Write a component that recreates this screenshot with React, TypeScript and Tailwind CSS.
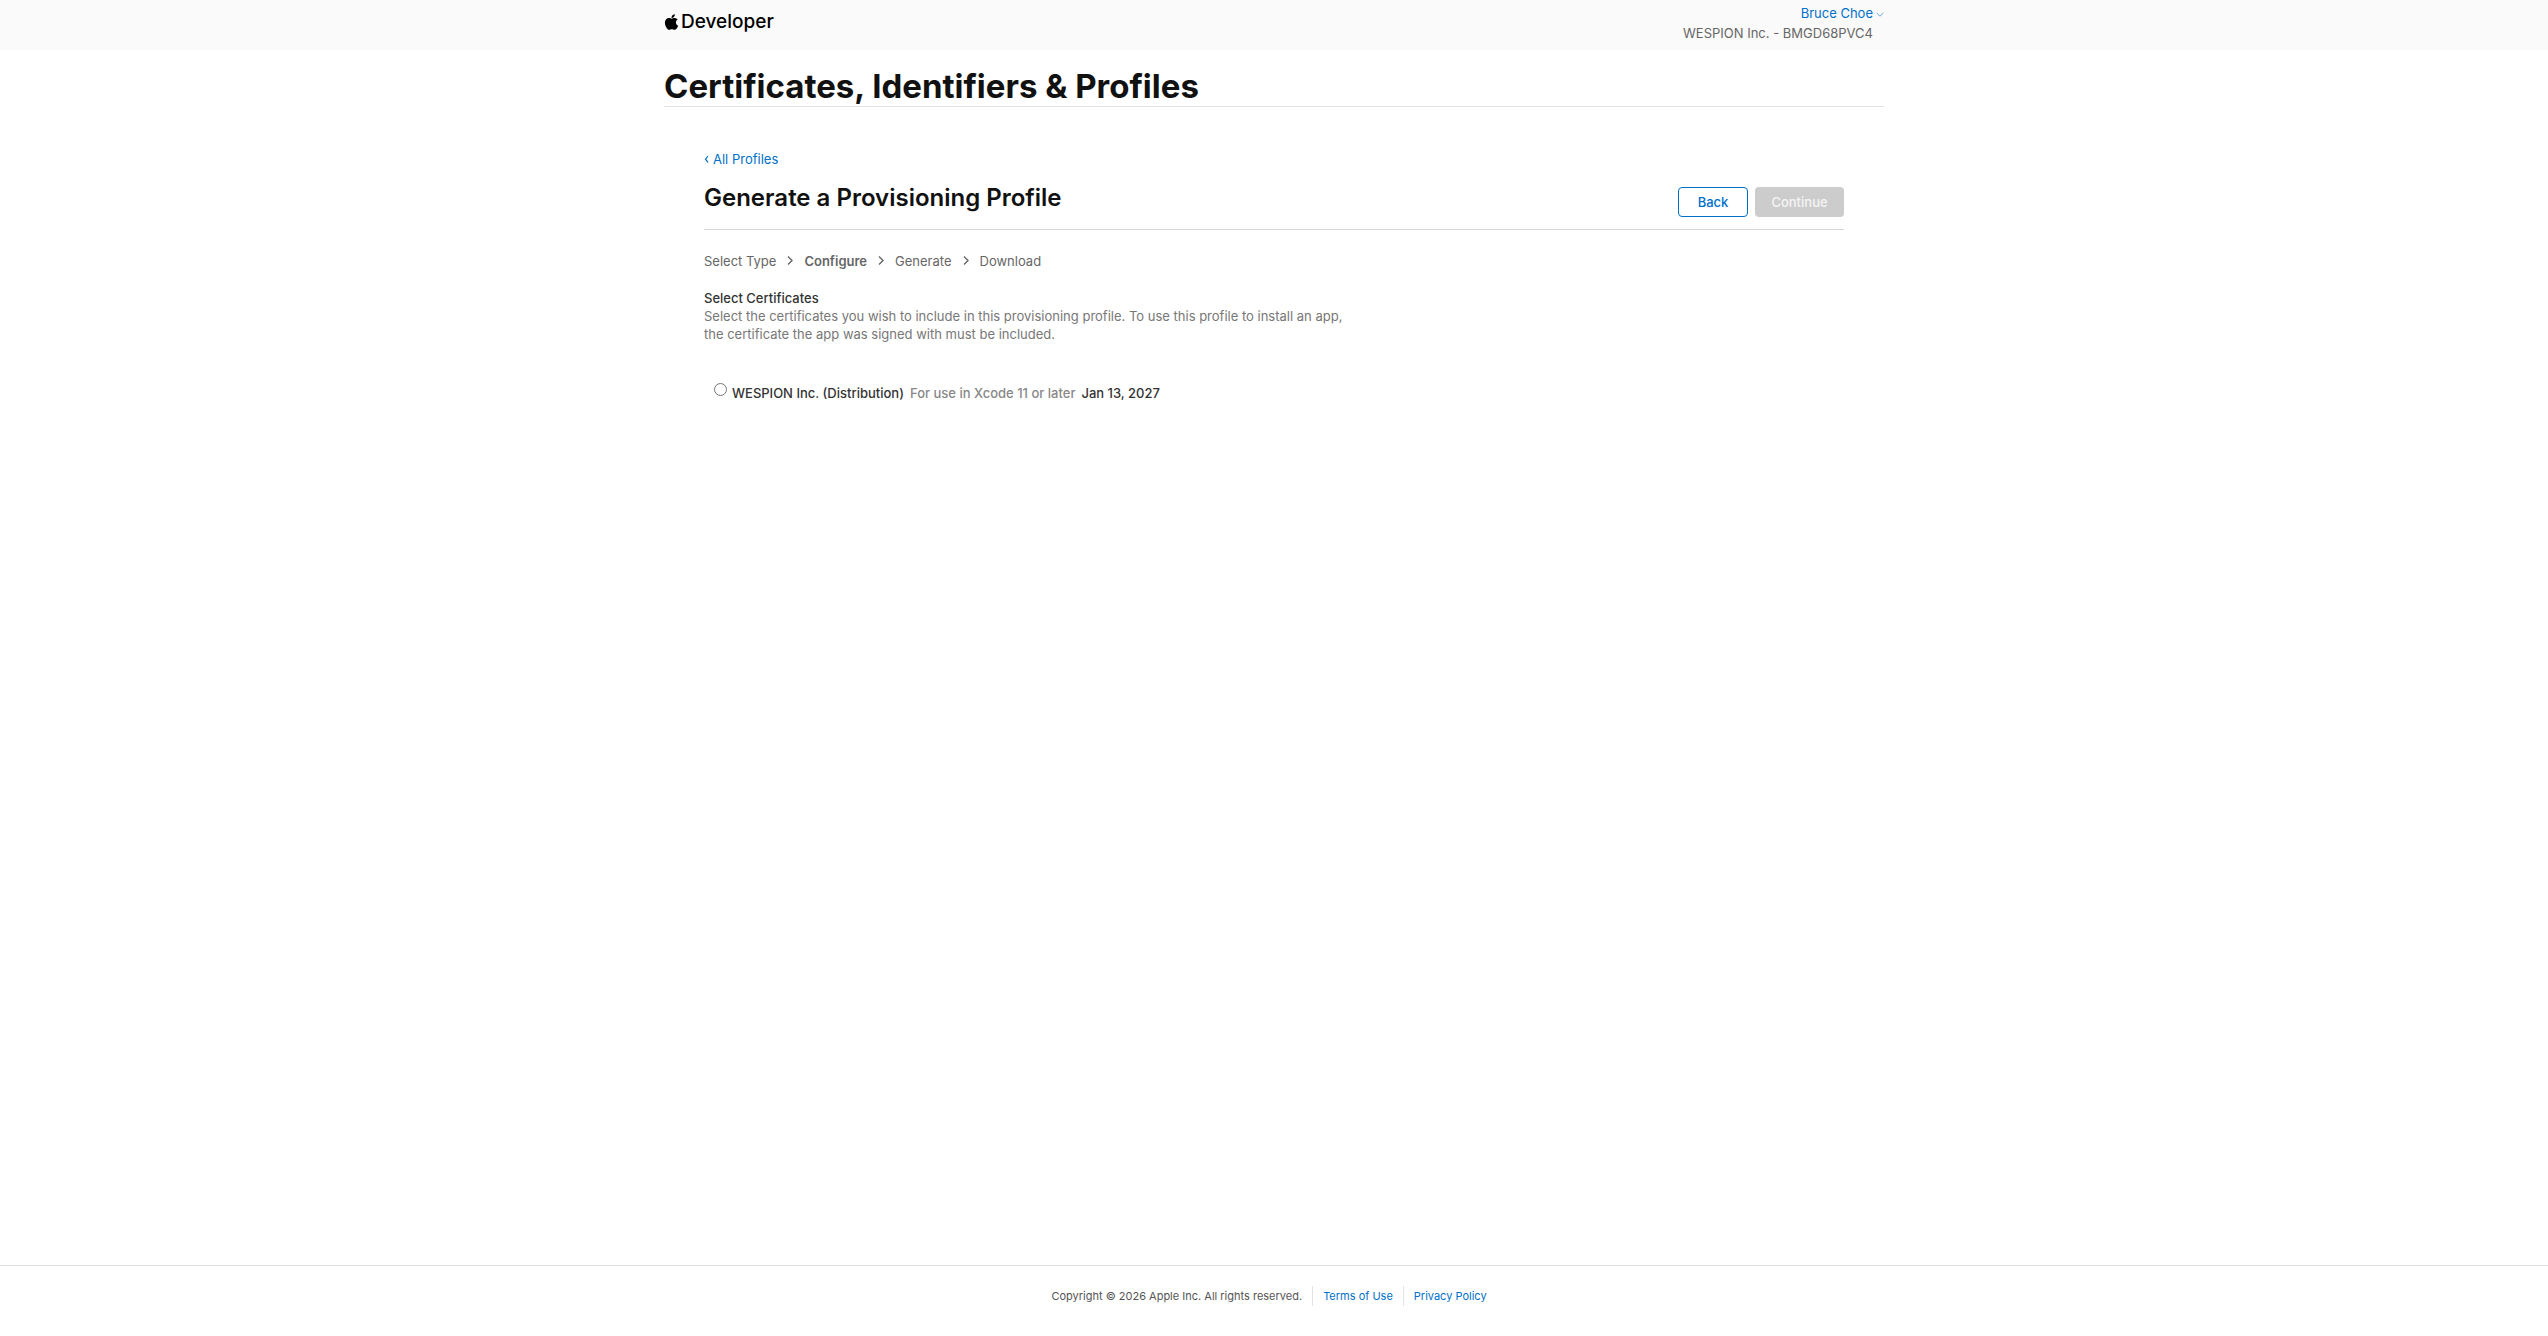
import React from 'react';
import { FaApple } from 'react-icons/fa';

const steps = ['Select Type', 'Configure', 'Generate', 'Download'];
const currentStep = 'Configure';

const certificates = [
  { id: 'dist', name: 'WESPION Inc. (Distribution)', note: 'For use in Xcode 11 or later', expires: 'Jan 13, 2027' },
];

const Header: React.FC = () => (
  <header className="bg-[#fafafa]">
    <div className="max-w-[1220px] h-[50px] mx-auto flex justify-between items-start">
      <a href="#" className="flex items-center gap-[2px] pt-2 text-black" aria-label="Apple Developer">
        <FaApple className="w-[15px] h-[18px]" />
        <span className="text-[19px] leading-7 font-medium">Developer</span>
      </a>
      <div className="flex items-start">
        <div className="pt-[3px] text-right leading-5">
          <button className="block ml-auto text-[#0070c9]">Bruce Choe</button>
          <div className="text-[#666666]">WESPION Inc. - BMGD68PVC4</div>
        </div>
        <svg className="w-2 h-2 ml-[3px] mt-[11px]" viewBox="0 0 8 8" fill="none" stroke="#6ba9dc">
          <path d="M.7 2 4 5.2 7.3 2" />
        </svg>
      </div>
    </div>
  </header>
);

const StepArrow: React.FC = () => (
  <svg className="w-2 h-3 mx-[10px]" viewBox="0 0 8 12" fill="none" stroke="#666666" strokeWidth="1.4">
    <path d="M2 1.5 6 5.5 2 9.5" />
  </svg>
);

const Footer: React.FC = () => (
  <footer className="border-t border-[#e3e3e3] h-[71px] text-[11px] leading-5">
    <div className="pt-5 flex justify-center">
      <p className="text-[#555555] pr-[10px]">Copyright © 2026 Apple Inc. All rights reserved.</p>
      <a href="#" className="text-[#0070c9] border-l border-[#e3e3e3] px-[10px]">Terms of Use</a>
      <a href="#" className="text-[#0070c9] border-l border-[#e3e3e3] px-[10px]">Privacy Policy</a>
    </div>
  </footer>
);

const App: React.FC = () => {
  return (
    <div className="min-h-screen flex flex-col bg-white text-[13px] leading-[18px] text-[#333333] font-['Inter',sans-serif]">
      <Header />
      <main className="flex-1 w-full max-w-[1220px] mx-auto">
        <h1 className="pt-4 text-[33px] leading-10 font-bold text-[#111111] border-b border-[#e3e3e3]">
          Certificates, Identifiers &amp; Profiles
        </h1>

        <div className="px-10 pt-[43px]">
          <a href="#" className="flex items-center gap-1 text-[#0070c9]">
            <svg className="w-[5px] h-2" viewBox="0 0 5 8" fill="none" stroke="currentColor" strokeWidth="1.2">
              <path d="M4 1 1.5 4.2 4 7.4" />
            </svg>
            All Profiles
          </a>

          <div className="flex justify-between items-start pt-[18px] pb-3 border-b border-[#d6d6d6]">
            <h2 className="text-2xl leading-6 font-semibold text-[#111111]">Generate a Provisioning Profile</h2>
            <div className="flex gap-[7px] pt-px font-medium">
              <button className="h-[30px] w-[70px] rounded border border-[#0070c9] text-[#0070c9]">Back</button>
              <button disabled className="h-[30px] w-[89px] rounded bg-[#cccccc] text-[#f5f5f5]">Continue</button>
            </div>
          </div>

          <ol className="flex items-center pt-[22px] text-[#666666]">
            {steps.map((step, i) => (
              <li key={step} className="flex items-center">
                {i > 0 && <StepArrow />}
                <span className={step === currentStep ? 'font-semibold' : ''}>{step}</span>
              </li>
            ))}
          </ol>

          <section className="pt-[19px]">
            <h3 className="font-medium">Select Certificates</h3>
            <p className="max-w-[640px] text-[#777777]">
              Select the certificates you wish to include in this provisioning profile. To use this profile to install an app, the certificate the app was signed with must be included.
            </p>
          </section>

          <div className="pt-10 pl-[10px]">
            {certificates.map((cert) => (
              <div key={cert.id} className="flex items-start">
                <input
                  id={cert.id}
                  type="radio"
                  name="certificate"
                  className="appearance-none w-[13px] h-[13px] rounded-full border border-[#767676] bg-white"
                />
                <label htmlFor={cert.id} className="pt-px pl-[5px] font-medium">
                  {cert.name}
                  <span className="mx-[6px] text-[#888888]">{cert.note}</span>
                  {cert.expires}
                </label>
              </div>
            ))}
          </div>
        </div>
      </main>
      <Footer />
    </div>
  );
};

export default App;
